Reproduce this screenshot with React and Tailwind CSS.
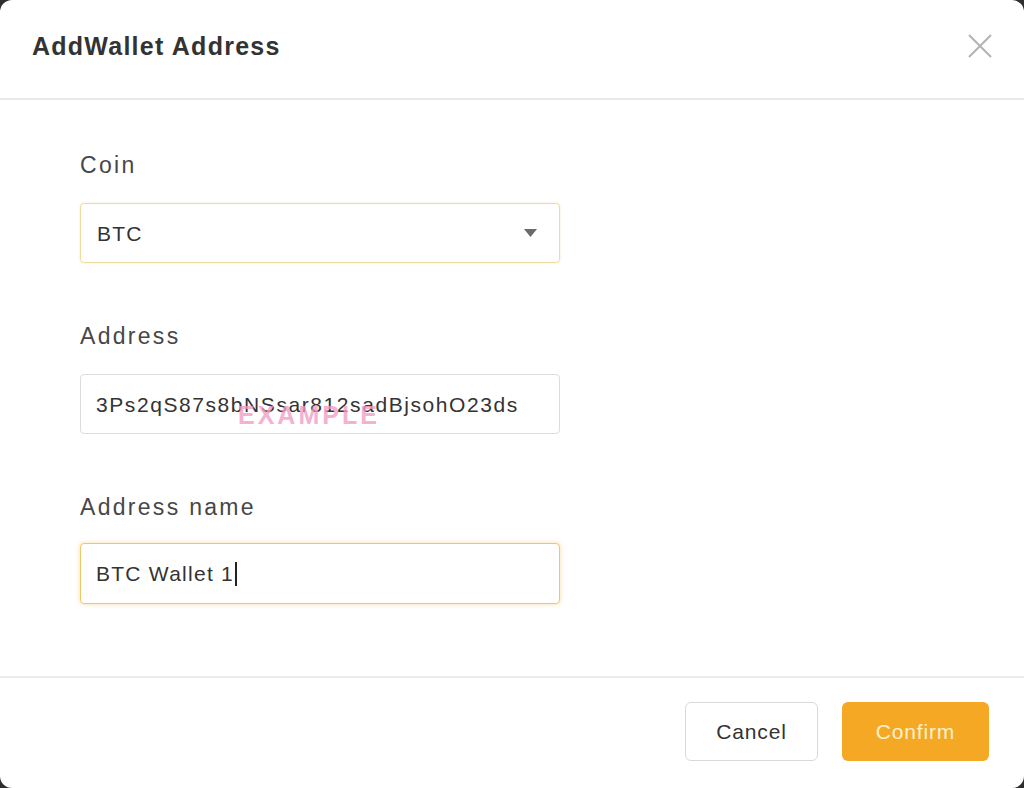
import React from 'react';

const Label = ({ children }) => (
  <p className="text-[23px] leading-none tracking-[0.1em] text-[#474747] h-[23px]">{children}</p>
);

const App = () => {
  return (
    <div className="font-['Liberation_Sans',Arial,sans-serif] w-[1024px] h-[788px] bg-[#2e2e2e] overflow-hidden">
      <div className="w-full h-full bg-white rounded-xl flex flex-col">
        {/* Header */}
        <div className="h-[98px] flex items-center justify-between pl-[32px] pr-[32px] pb-[6px]">
          <h1 className="text-[25px] leading-none font-bold tracking-[0.05em] text-[#333]">AddWallet Address</h1>
          <svg width="24" height="24" viewBox="0 0 24 24" className="text-[#b3b3b3]">
            <path d="M1 1L23 23M23 1L1 23" stroke="currentColor" strokeWidth="2" fill="none" />
          </svg>
        </div>
        <div className="h-[2px] bg-[#e8e8e8]" />

        {/* Body */}
        <div className="pl-[80px] pt-[54px] pb-[72px] flex flex-col gap-[62px]">
          <div>
            <Label>Coin</Label>
            <div className="mt-[26px] w-[480px] h-[60px] border border-[#efdc9a] rounded-[4px] flex items-center justify-between pl-[16px] pr-[22px] shadow-[0_0_2px_rgba(240,210,120,0.5)]">
              <span className="text-[21px] leading-none tracking-[0.06em] text-[#333]">BTC</span>
              <svg width="13" height="8" viewBox="0 0 13 8">
                <path d="M0 0H13L6.5 8Z" fill="#6b6b6b" />
              </svg>
            </div>
          </div>

          <div>
            <Label>Address</Label>
            <div className="relative mt-[26px] w-[480px] h-[60px] border border-[#dcdcdc] rounded-[4px] flex items-center pl-[15px]">
              <span className="text-[21px] leading-none tracking-[0.075em] text-[#333]">3Ps2qS87s8bNSsar812sadBjsohO23ds</span>
              {/* watermark */}
              <span className="absolute left-[157px] top-[28px] text-[25px] leading-none font-bold tracking-[3px] text-[#f39cc3]/80">EXAMPLE</span>
            </div>
          </div>

          <div>
            <Label>Address name</Label>
            <div className="mt-[24px] w-[480px] h-[61px] border border-[#f1c665] rounded-[4px] flex items-center pl-[15px] shadow-[0_0_4px_rgba(243,190,80,0.55)]">
              <span className="text-[21px] leading-none tracking-[0.06em] text-[#333]">BTC Wallet 1</span>
              <span className="ml-[1px] w-[2px] h-[24px] bg-[#222]" />
            </div>
          </div>
        </div>

        <div className="h-[2px] bg-[#ececec]" />

        {/* Footer */}
        <div className="flex justify-end gap-[24px] pt-[24px] pr-[35px]">
          <button className="w-[133px] h-[59px] border border-[#d9d9d9] rounded-[6px] bg-white text-[21px] tracking-[0.04em] text-[#333]">
            Cancel
          </button>
          <button className="w-[147px] h-[59px] rounded-[6px] bg-[#f5a823] text-[21px] tracking-[0.04em] text-[#fdf1cf]">
            Confirm
          </button>
        </div>
      </div>
    </div>
  );
};

export default App;
